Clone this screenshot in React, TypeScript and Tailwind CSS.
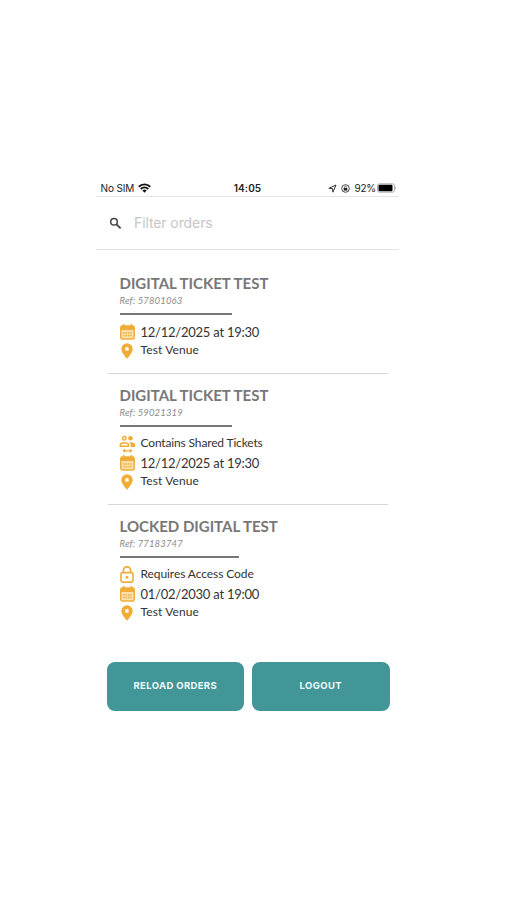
import type { ReactNode } from 'react'

interface Order {
    title: string
    reference: string
    date: string
    venue: string
    ruleClass: string
    notice?: 'shared' | 'locked'
}

const orders: Order[] = [
    {
        title: 'DIGITAL TICKET TEST',
        reference: '57801063',
        date: '12/12/2025 at 19:30',
        venue: 'Test Venue',
        ruleClass: 'w-[112px]',
    },
    {
        title: 'DIGITAL TICKET TEST',
        reference: '59021319',
        date: '12/12/2025 at 19:30',
        venue: 'Test Venue',
        ruleClass: 'w-[112px]',
        notice: 'shared',
    },
    {
        title: 'LOCKED DIGITAL TEST',
        reference: '77183747',
        date: '01/02/2030 at 19:00',
        venue: 'Test Venue',
        ruleClass: 'w-[119.5px]',
        notice: 'locked',
    },
]

const CalendarIcon = () => (
    <svg width="15" height="16" viewBox="0 0 15 16" fill="none">
        <rect x="0.8" y="2.1" width="13.4" height="13" rx="1.6" fill="#fbe0ae" stroke="#efad38" strokeWidth="1.5" />
        <path d="M.8 6V3.7c0-.9.7-1.6 1.6-1.6h10.2c.9 0 1.6.7 1.6 1.6V6z" fill="#efad38" />
        <path d="M3.7 1.1v2.1M11.3 1.1v2.1" stroke="#efad38" strokeWidth="2" strokeLinecap="round" />
        <path d="M3.3 9h8.400M3.300 11.600h8.400" stroke="#efad38" strokeWidth="1.400" strokeDasharray="1.500 .8" />
    </svg>
)

const PinIcon = () => (
    <svg width="12" height="16" viewBox="0 0 12 16">
        <path
            fill="#efad38"
            fillRule="evenodd"
            d="M6 .3A5.7 5.7 0 0 0 .3 6C.3 9.9 6 15.8 6 15.8S11.7 9.900 11.700 6A5.700 5.700 0 0 0 6 .3zM6 4a1.900 1.900 0 1 1 0 3.800A1.900 1.900 0 0 1 6 4z"
        />
    </svg>
)

const SharedIcon = () => (
    <svg className="-mx-px shrink-0" width="17" height="18" viewBox="0 0 16 18" fill="none" stroke="#efad38">
        <circle cx="4.9" cy="3.3" r="1.7" strokeWidth="1.5" />
        <circle cx="11" cy="3.3" r="2.3" fill="#efad38" stroke="none" />
        <path d="M.9 11.3V9.8c0-1.300 2-2.100 4-2.100s4 .8 4 2.100v1.500z" strokeWidth="1.600" />
        <path d="M10.300 7c3 0 5.400 1.200 5.400 3v2.100h-4.600V9.900c0-1.100-.3-2.100-.8-2.900z" fill="#efad38" stroke="none" />
        <path d="M4.200 15.800h7.600M5.700 14.200l-1.800 1.600 1.800 1.600M10.300 14.200l1.800 1.600-1.800 1.600" strokeWidth="1.200" />
    </svg>
)

const LockIcon = () => (
    <svg width="14" height="17" viewBox="0 0 14 17" fill="none" stroke="#efad38">
        <rect x="1" y="6.6" width="12" height="9.5" rx="1.5" strokeWidth="1.6" />
        <path d="M3.4 6.6V4.5a3.600 3.600 0 0 1 7.200 0v2.100" strokeWidth="1.700" />
        <circle cx="7" cy="11.300" r="1.500" fill="#efad38" stroke="none" />
    </svg>
)

const WifiIcon = () => (
    <svg width="13" height="10" viewBox="0 0 13 10" fill="none" stroke="#111" strokeWidth="1.9">
        <path d="M.8 3.7a8.200 8.200 0 0 1 11.400 0" />
        <path d="M2.800 6a5.300 5.300 0 0 1 7.400 0" />
        <path d="M6.500 9.700 4.400 7.500a3 3 0 0 1 4.200 0z" fill="#111" stroke="none" />
    </svg>
)

const StatusBar = () => (
    <div className="grid h-[17px] grid-cols-3 items-center border-b border-[#e4e4e4] text-[10px] leading-4 text-[#222]">
        <div className="flex items-center gap-[4px] pl-[4.5px]">
            <span className="tracking-[-0.15px]">No SIM</span>
            <WifiIcon />
        </div>
        <div className="text-center font-semibold tracking-[0.1px]">14:05</div>
        <div className="flex items-center justify-end pr-[2px]">
            <svg width="9" height="9" viewBox="0 0 9 9" fill="none" stroke="#333" strokeWidth="1" strokeLinejoin="round">
                <path d="M.9 4.3 8 1 4.900 8.200 4.500 4.600z" />
            </svg>
            <svg className="ml-[4px]" width="9" height="9" viewBox="0 0 9 9" fill="none" stroke="#333">
                <circle cx="4.5" cy="4.5" r="3.8" strokeWidth=".9" />
                <rect x="2.7" y="4" width="3.6" height="2.6" fill="#222" stroke="none" />
                <path d="M3.400 4.200v-.7a1.100 1.100 0 0 1 2.200 0" strokeWidth=".8" />
            </svg>
            <span className="ml-[4px] tracking-[-0.2px]">92%</span>
            <svg className="ml-[1px]" width="20" height="10" viewBox="0 0 20 10">
                <rect x=".5" y=".8" width="17" height="8.4" rx="2" fill="#fff" stroke="#999" strokeWidth=".8" />
                <rect x="1.5" y="1.8" width="14" height="6.4" rx="1" fill="#000" />
                <path d="M18.400 3.400c1 .4 1 2.800 0 3.200z" fill="#999" />
            </svg>
        </div>
    </div>
)

const SearchBar = () => (
    <div className="flex h-[53px] items-center border-b border-[#e2e2e2] pl-[13px]">
        <svg width="13" height="13" viewBox="0 0 13 13" fill="none" stroke="#444">
            <circle cx="5" cy="4.8" r="3.3" strokeWidth="1.5" />
            <path d="m7.500 7.300 4.100 4.100" strokeWidth="1.900" />
        </svg>
        <span className="ml-[12px] text-[14px] leading-5 tracking-[-0.1px] text-[#c6c6c8]">Filter orders</span>
    </div>
)

interface DetailProps {
    icon: ReactNode
    className: string
    children: ReactNode
}

const Detail = ({ icon, className, children }: DetailProps) => (
    <div className={`flex items-center whitespace-nowrap text-[#333] ${className}`}>
        <span className="mr-[6px] flex w-[15px] shrink-0 justify-center">{icon}</span>
        {children}
    </div>
)

const OrderItem = ({ order }: { order: Order }) => (
    <li className="border-b border-[#d6d6d6] pt-[11px] pr-[12px] pb-[13px] pl-[11.5px] font-[Lato,sans-serif] last:border-b-0">
        <h2 className="h-[21px] text-[15px] leading-5 font-bold whitespace-nowrap text-[#777]">{order.title}</h2>
        <p className="h-[14px] text-[9.5px] leading-[13px] tracking-[0.15px] text-[#8c8c8c] italic">
            Ref: {order.reference}
        </p>
        <div className={`mt-[5px] mb-[7px] h-[2px] bg-[#777] ${order.ruleClass}`} />
        {order.notice === 'shared' && (
            <Detail icon={<SharedIcon />} className="h-[19px] text-[12px] tracking-[-0.15px]">
                <span className="-mt-px">Contains Shared Tickets</span>
            </Detail>
        )}
        {order.notice === 'locked' && (
            <Detail icon={<LockIcon />} className="h-[19px] text-[12px] tracking-[-0.08px]">
                <span className="-mt-px">Requires Access Code</span>
            </Detail>
        )}
        <Detail icon={<CalendarIcon />} className="h-5 text-[13px] tracking-[-0.24px]">
            <span className="pt-px">{order.date}</span>
        </Detail>
        <Detail icon={<PinIcon />} className="h-[18px] text-[12px] tracking-[0.12px]">
            <span className="-mt-[2px]">{order.venue}</span>
        </Detail>
    </li>
)

const App = () => {
    return (
        <div className="min-h-[900px] bg-white pt-[180px] font-[Inter,sans-serif]">
            <main className="ml-[96px] w-[303px]">
                <StatusBar />
                <SearchBar />
                <ul className="mr-[11px] ml-[12px] pt-3">
                    {orders.map((order) => (
                        <OrderItem key={order.reference} order={order} />
                    ))}
                </ul>
                <div className="mt-[27px] mr-[9.5px] ml-[10.5px] grid grid-cols-2 gap-[8px]">
                    <button className="h-[49px] rounded-lg bg-[#429698] text-[9.5px] font-bold tracking-[0.35px] text-[#eefafa]">
                        RELOAD ORDERS
                    </button>
                    <button className="h-[49px] rounded-lg bg-[#429698] text-[9.5px] font-bold tracking-[0.35px] text-[#eefafa]">
                        LOGOUT
                    </button>
                </div>
            </main>
        </div>
    )
}

export default App
